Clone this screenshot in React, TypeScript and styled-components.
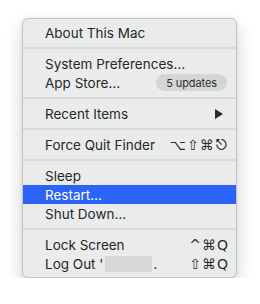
import React from "react";
import styled, { createGlobalStyle } from "styled-components";

const Global = createGlobalStyle`
  html, body { margin: 0; padding: 0; background: #ffffff; }
  body { font-family: Inter, "Noto Sans", "DejaVu Sans", sans-serif; -webkit-font-smoothing: antialiased; }
`;

const Page = styled.div`
  padding: 18px 0 0 22px;
`;

const Menu = styled.div`
  width: 213px;
  box-sizing: content-box;
  background: #eaecec;
  border: 1px solid #c4c6c6;
  border-radius: 6px;
  padding: 4px 0 4px;
  box-shadow: 0 8px 18px rgba(0, 0, 0, 0.18), 0 0 3px rgba(0, 0, 0, 0.08);
`;

const Item = styled.div<{ $active?: boolean }>`
  height: 19px;
  display: flex;
  align-items: center;
  justify-content: space-between;
  padding: 0 7px 0 22px;
  font-size: 13.5px;
  color: ${(p) => (p.$active ? "#ffffff" : "#272727")};
  background: ${(p) => (p.$active ? "#2a63f5" : "transparent")};
`;

const Label = styled.span`
  display: flex;
  align-items: center;
  white-space: nowrap;
`;

const Separator = styled.div`
  height: 12px;
  display: flex;
  align-items: center;
  &::after {
    content: "";
    display: block;
    width: 100%;
    height: 2px;
    background: #d9dbdb;
  }
`;

const Badge = styled.span`
  height: 17px;
  padding: 0 10px;
  margin-right: 2px;
  border-radius: 9px;
  background: #d4d6d6;
  color: #2e2e2e;
  font-size: 11px;
  letter-spacing: -0.1px;
  display: flex;
  align-items: center;
`;

const Shortcut = styled.span`
  font-family: "DejaVu Sans", Inter, sans-serif;
  font-size: 14px;
  color: #2a2a2a;
  letter-spacing: 1px;
  display: flex;
  align-items: center;
`;

const Arrow = styled.span`
  width: 0;
  height: 0;
  border-top: 5px solid transparent;
  border-bottom: 5px solid transparent;
  border-left: 8px solid #2a2a2a;
  margin-right: 6px;
`;

const Redacted = styled.span`
  display: inline-block;
  width: 47px;
  height: 16px;
  background: #d7d9d9;
  margin: 0 1px 0 2px;
`;

export default function App() {
  return (
    <>
      <Global />
      <Page>
        <Menu>
          <Item>
            <Label>About This Mac</Label>
          </Item>
          <Separator />
          <Item>
            <Label>System Preferences…</Label>
          </Item>
          <Item>
            <Label>App Store…</Label>
            <Badge>5 updates</Badge>
          </Item>
          <Separator />
          <Item>
            <Label>Recent Items</Label>
            <Arrow />
          </Item>
          <Separator />
          <Item>
            <Label>Force Quit Finder</Label>
            <Shortcut>⌥⇧⌘⎋</Shortcut>
          </Item>
          <Separator />
          <Item>
            <Label>Sleep</Label>
          </Item>
          <Item $active>
            <Label>Restart…</Label>
          </Item>
          <Item>
            <Label>Shut Down…</Label>
          </Item>
          <Separator />
          <Item>
            <Label>Lock Screen</Label>
            <Shortcut>^⌘Q</Shortcut>
          </Item>
          <Item>
            <Label>
              Log Out '<Redacted />.
            </Label>
            <Shortcut>⇧⌘Q</Shortcut>
          </Item>
        </Menu>
      </Page>
    </>
  );
}
